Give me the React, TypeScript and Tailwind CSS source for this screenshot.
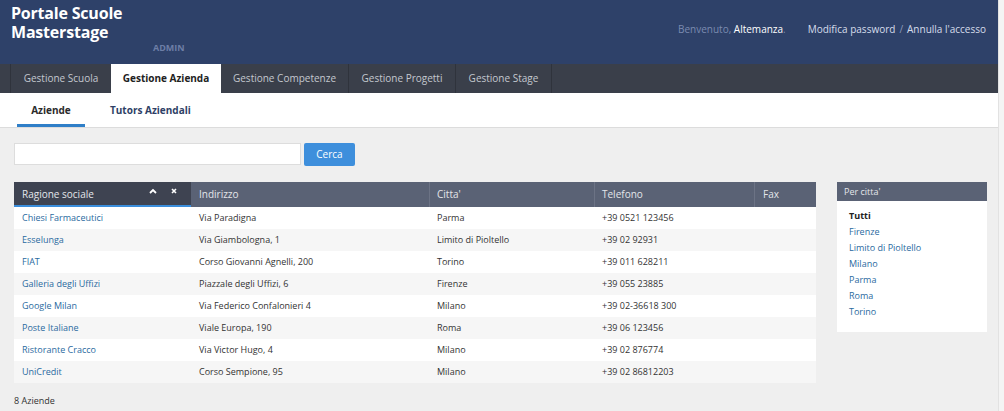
import React from "react";

const rows = [
  ["Chiesi Farmaceutici", "Via Paradigna", "Parma", "+39 0521 123456"],
  ["Esselunga", "Via Giambologna, 1", "Limito di Pioltello", "+39 02 92931"],
  ["FIAT", "Corso Giovanni Agnelli, 200", "Torino", "+39 011 628211"],
  ["Galleria degli Uffizi", "Piazzale degli Uffizi, 6", "Firenze", "+39 055 23885"],
  ["Google Milan", "Via Federico Confalonieri 4", "Milano", "+39 02-36618 300"],
  ["Poste Italiane", "Viale Europa, 190", "Roma", "+39 06 123456"],
  ["Ristorante Cracco", "Via Victor Hugo, 4", "Milano", "+39 02 876774"],
  ["UniCredit", "Corso Sempione, 95", "Milano", "+39 02 86812203"],
];

const cities = ["Firenze", "Limito di Pioltello", "Milano", "Parma", "Roma", "Torino"];

export default function App() {
  return (
    <div
      className="flex w-[1004px] h-[411px] overflow-hidden bg-[#efefef]"
      style={{ fontFamily: '"Open Sans", "Noto Sans", sans-serif' }}
    >
      <div className="w-[998px] shrink-0 flex flex-col">
        {/* Header */}
        <div className="h-[64px] bg-[#2e4169] flex justify-between">
          <div className="pl-[11px] pt-[4px] relative w-[200px]">
            <div className="text-white font-bold text-[16px] leading-[19px] tracking-[-0.2px]">
              <div>Portale Scuole</div>
              <div>Masterstage</div>
            </div>
            <div className="absolute left-[153px] top-[41px] text-[9px] font-bold text-[#6d7ea6]">ADMIN</div>
          </div>
          <div className="pt-[22px] pr-[12px] text-[10px] flex">
            <span className="text-[#7b8bb0]">
              Benvenuto, <span className="text-white">Altemanza</span>.
            </span>
            <span className="ml-[22px] text-[#d6ddeb]">Modifica password</span>
            <span className="mx-[4px] text-[#8d9bbd]">/</span>
            <span className="text-[#d6ddeb]">Annulla l'accesso</span>
          </div>
        </div>
        {/* Tabs */}
        <div className="h-[29px] bg-[#3a3f4a] flex pl-[10px] text-[10px]">
          <div className="w-[101px] border-l border-[#2f333c] flex items-center justify-center text-[#c4c8cf]">Gestione Scuola</div>
          <div className="w-[110px] bg-white flex items-center justify-center font-bold text-[#222]">Gestione Azienda</div>
          <div className="w-[128px] border-r border-[#2f333c] flex items-center justify-center text-[#c4c8cf]">Gestione Competenze</div>
          <div className="w-[107px] border-r border-[#2f333c] flex items-center justify-center text-[#c4c8cf]">Gestione Progetti</div>
          <div className="w-[96px] border-r border-[#2f333c] flex items-center justify-center text-[#c4c8cf]">Gestione Stage</div>
        </div>
        {/* Subnav */}
        <div className="h-[35px] bg-white border-b border-[#dcdcdc] flex pl-[17px] text-[10px] font-bold">
          <div className="w-[68px] flex items-center justify-center text-[#2b2b2b] border-b-[3px] border-[#2f7fc8] pt-[3px]">Aziende</div>
          <div className="ml-[25px] flex items-center text-[#2e3f66]">Tutors Aziendali</div>
        </div>
        {/* Content */}
        <div className="flex-1 px-[14px] pt-[15px]">
          <div className="flex gap-[3px]">
            <div className="w-[287px] h-[22px] bg-white border border-[#dddddd]" />
            <div className="w-[51px] h-[23px] bg-[#3e8fdc] rounded-[2px] text-white text-[10px] flex items-center justify-center">Cerca</div>
          </div>
          <div className="flex mt-[16px]">
            <div className="w-[802px] shrink-0">
              <div className="flex h-[25px] bg-[#5a6275] text-[10px] text-[#e4e6ea]">
                <div className="w-[177px] bg-[#3e4351] border-b-[2px] border-[#3a8ddb] flex items-center justify-between pl-[8px] pr-[14px] pt-[2px]">
                  <span>Ragione sociale</span>
                  <span className="flex gap-[14px] items-center -mt-[8px]">
                    <svg width="8" height="6" viewBox="0 0 8 6"><path d="M1 5 L4 2 L7 5" stroke="#fff" strokeWidth="1.8" fill="none" /></svg>
                    <svg width="6" height="6" viewBox="0 0 6 6"><path d="M1 1 L5 5 M5 1 L1 5" stroke="#fff" strokeWidth="1.6" /></svg>
                  </span>
                </div>
                <div className="w-[239px] border-r border-[#6c7385] flex items-center pl-[8px]">Indirizzo</div>
                <div className="w-[165px] border-r border-[#6c7385] flex items-center pl-[7px]">Citta'</div>
                <div className="w-[160px] border-r border-[#6c7385] flex items-center pl-[7px]">Telefono</div>
                <div className="flex-1 flex items-center pl-[8px]">Fax</div>
              </div>
              {rows.map((r, i) => (
                <div key={i} className={`flex h-[22px] items-center text-[9px] ${i % 2 === 0 ? "bg-white" : "bg-[#f6f6f6]"}`}>
                  <div className="w-[177px] pl-[8px] text-[#2a6aa0]">{r[0]}</div>
                  <div className="w-[239px] pl-[8px] text-[#333]">{r[1]}</div>
                  <div className="w-[165px] pl-[7px] text-[#333]">{r[2]}</div>
                  <div className="w-[160px] pl-[7px] text-[#333]">{r[3]}</div>
                  <div className="flex-1" />
                </div>
              ))}
              <div className="mt-[11px] text-[9px] text-[#333]">8 Aziende</div>
            </div>
            <div className="ml-[21px] w-[150px] shrink-0">
              <div className="h-[19px] bg-[#5a6275] text-[9px] text-[#e4e6ea] flex items-center pl-[7px]">Per citta'</div>
              <div className="bg-white pl-[12px] pt-[7px] pb-[12px] text-[9px] leading-[16px]">
                <div className="font-bold text-[#222]">Tutti</div>
                {cities.map((c) => (
                  <div key={c} className="text-[#2a6aa0]">{c}</div>
                ))}
              </div>
            </div>
          </div>
        </div>
      </div>
      <div className="flex-1 bg-[#f4f4f4] border-l border-[#e2e2e2]" />
    </div>
  );
}
